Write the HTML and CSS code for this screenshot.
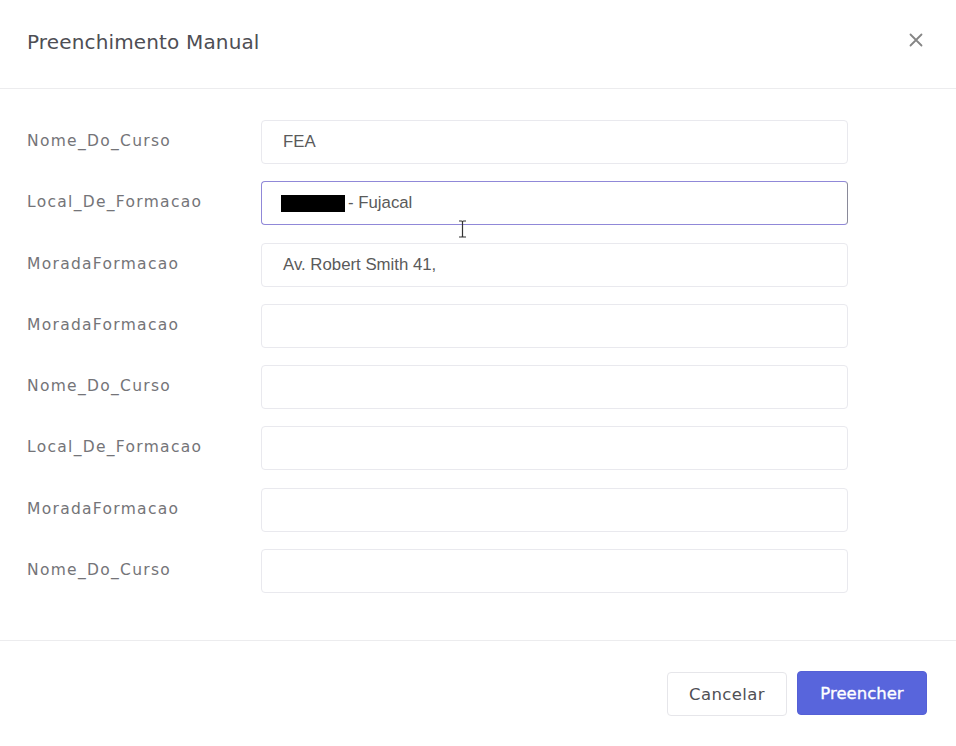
FILE: index.html
```html
<!DOCTYPE html>
<html lang="pt">
<head>
<meta charset="utf-8">
<title>Preenchimento Manual</title>
<link rel="stylesheet" href="styles.css">
</head>
<body>
<div class="modal">
  <header class="modal-header">
    <h1 class="modal-title">Preenchimento Manual</h1>
    <button class="close" aria-label="Fechar">
      <svg width="14" height="14" viewBox="0 0 14 14"><path d="M1.5 1.5 L12.5 12.5 M12.5 1.5 L1.5 12.5" stroke="#858585" stroke-width="1.8" fill="none" stroke-linecap="round"/></svg>
    </button>
  </header>
  <main class="modal-body">
    <div class="row"><label class="label">Nome_Do_Curso</label><div class="input">FEA</div></div>
    <div class="row"><label class="label">Local_De_Formacao</label><div class="input focused"><span class="redact"></span>- Fujacal
      <svg class="cursor" width="9" height="18" viewBox="0 0 9 18"><path d="M1 1 H3.5 Q4.5 1 4.5 2.5 Q4.5 1 5.5 1 H8 M4.5 2.5 V15.5 M1 17 H3.5 Q4.5 17 4.5 15.5 Q4.5 17 5.5 17 H8" stroke="#333" stroke-width="1.2" fill="none"/></svg>
    </div></div>
    <div class="row"><label class="label">MoradaFormacao</label><div class="input">Av. Robert Smith 41,</div></div>
    <div class="row"><label class="label">MoradaFormacao</label><div class="input"></div></div>
    <div class="row"><label class="label">Nome_Do_Curso</label><div class="input"></div></div>
    <div class="row"><label class="label">Local_De_Formacao</label><div class="input"></div></div>
    <div class="row"><label class="label">MoradaFormacao</label><div class="input"></div></div>
    <div class="row"><label class="label">Nome_Do_Curso</label><div class="input"></div></div>
  </main>
  <footer class="modal-footer">
    <button class="btn btn-cancel">Cancelar</button>
    <button class="btn btn-primary">Preencher</button>
  </footer>
</div>
</body>
</html>
```
FILE: styles.css
```css
* { box-sizing: border-box; }
html, body { margin: 0; padding: 0; background: #fff; }
body { font-family: "DejaVu Sans", "Open Sans", sans-serif; color: #555; }
.modal { width: 956px; height: 746px; display: flex; flex-direction: column; }
.modal-header {
  height: 89px;
  border-bottom: 1px solid #ececee;
  display: flex;
  align-items: center;
  justify-content: space-between;
  padding: 0 33px 5px 27px;
}
.modal-title { margin: 0; font-size: 20px; font-weight: 400; color: #4e4e54; letter-spacing: 0.15px; }
.close { background: none; border: 0; padding: 0; width: 14px; height: 14px; display: flex; cursor: pointer; margin-top: -3px; }
.modal-body { padding: 31px 108px 0 27px; display: flex; flex-direction: column; gap: 17.3px; height: 552px; border-bottom: 1px solid #ececee; }
.row { display: flex; align-items: center; height: 44px; }
.label { width: 234px; font-size: 15.5px; letter-spacing: 1.3px; color: #747478; margin-top: -2px; }
.input {
  position: relative;
  flex: 1;
  height: 44px;
  border: 1px solid #e9e9ee;
  border-radius: 4px;
  padding: 0 21px;
  display: flex;
  align-items: center;
  font-family: "Liberation Sans", Arial, sans-serif;
  font-size: 16.8px;
  color: #5a5a5a;
}
.input.focused { border-color: #9088d8; border-right-color: #8a8a9a; }
.redact { display: inline-block; width: 64px; height: 17px; background: #000; margin-left: -2px; margin-right: 3px; }
.cursor { position: absolute; left: 196px; top: 38px; }
.modal-footer { flex: 1; display: flex; justify-content: flex-end; align-items: flex-start; gap: 10px; padding: 31px 29px 0 0; }
.btn { height: 44px; border-radius: 4px; font-family: "DejaVu Sans", sans-serif; font-size: 16.5px; cursor: pointer; padding: 0; }
.btn-cancel { width: 120px; background: #fff; border: 1px solid #e6e6ea; color: #505055; letter-spacing: 0.4px; }
.btn-primary { width: 130px; background: #5865dc; border: 1px solid #5560d6; color: #fff; margin-top: -1px; -webkit-text-stroke: 0.35px #fff; }
```
